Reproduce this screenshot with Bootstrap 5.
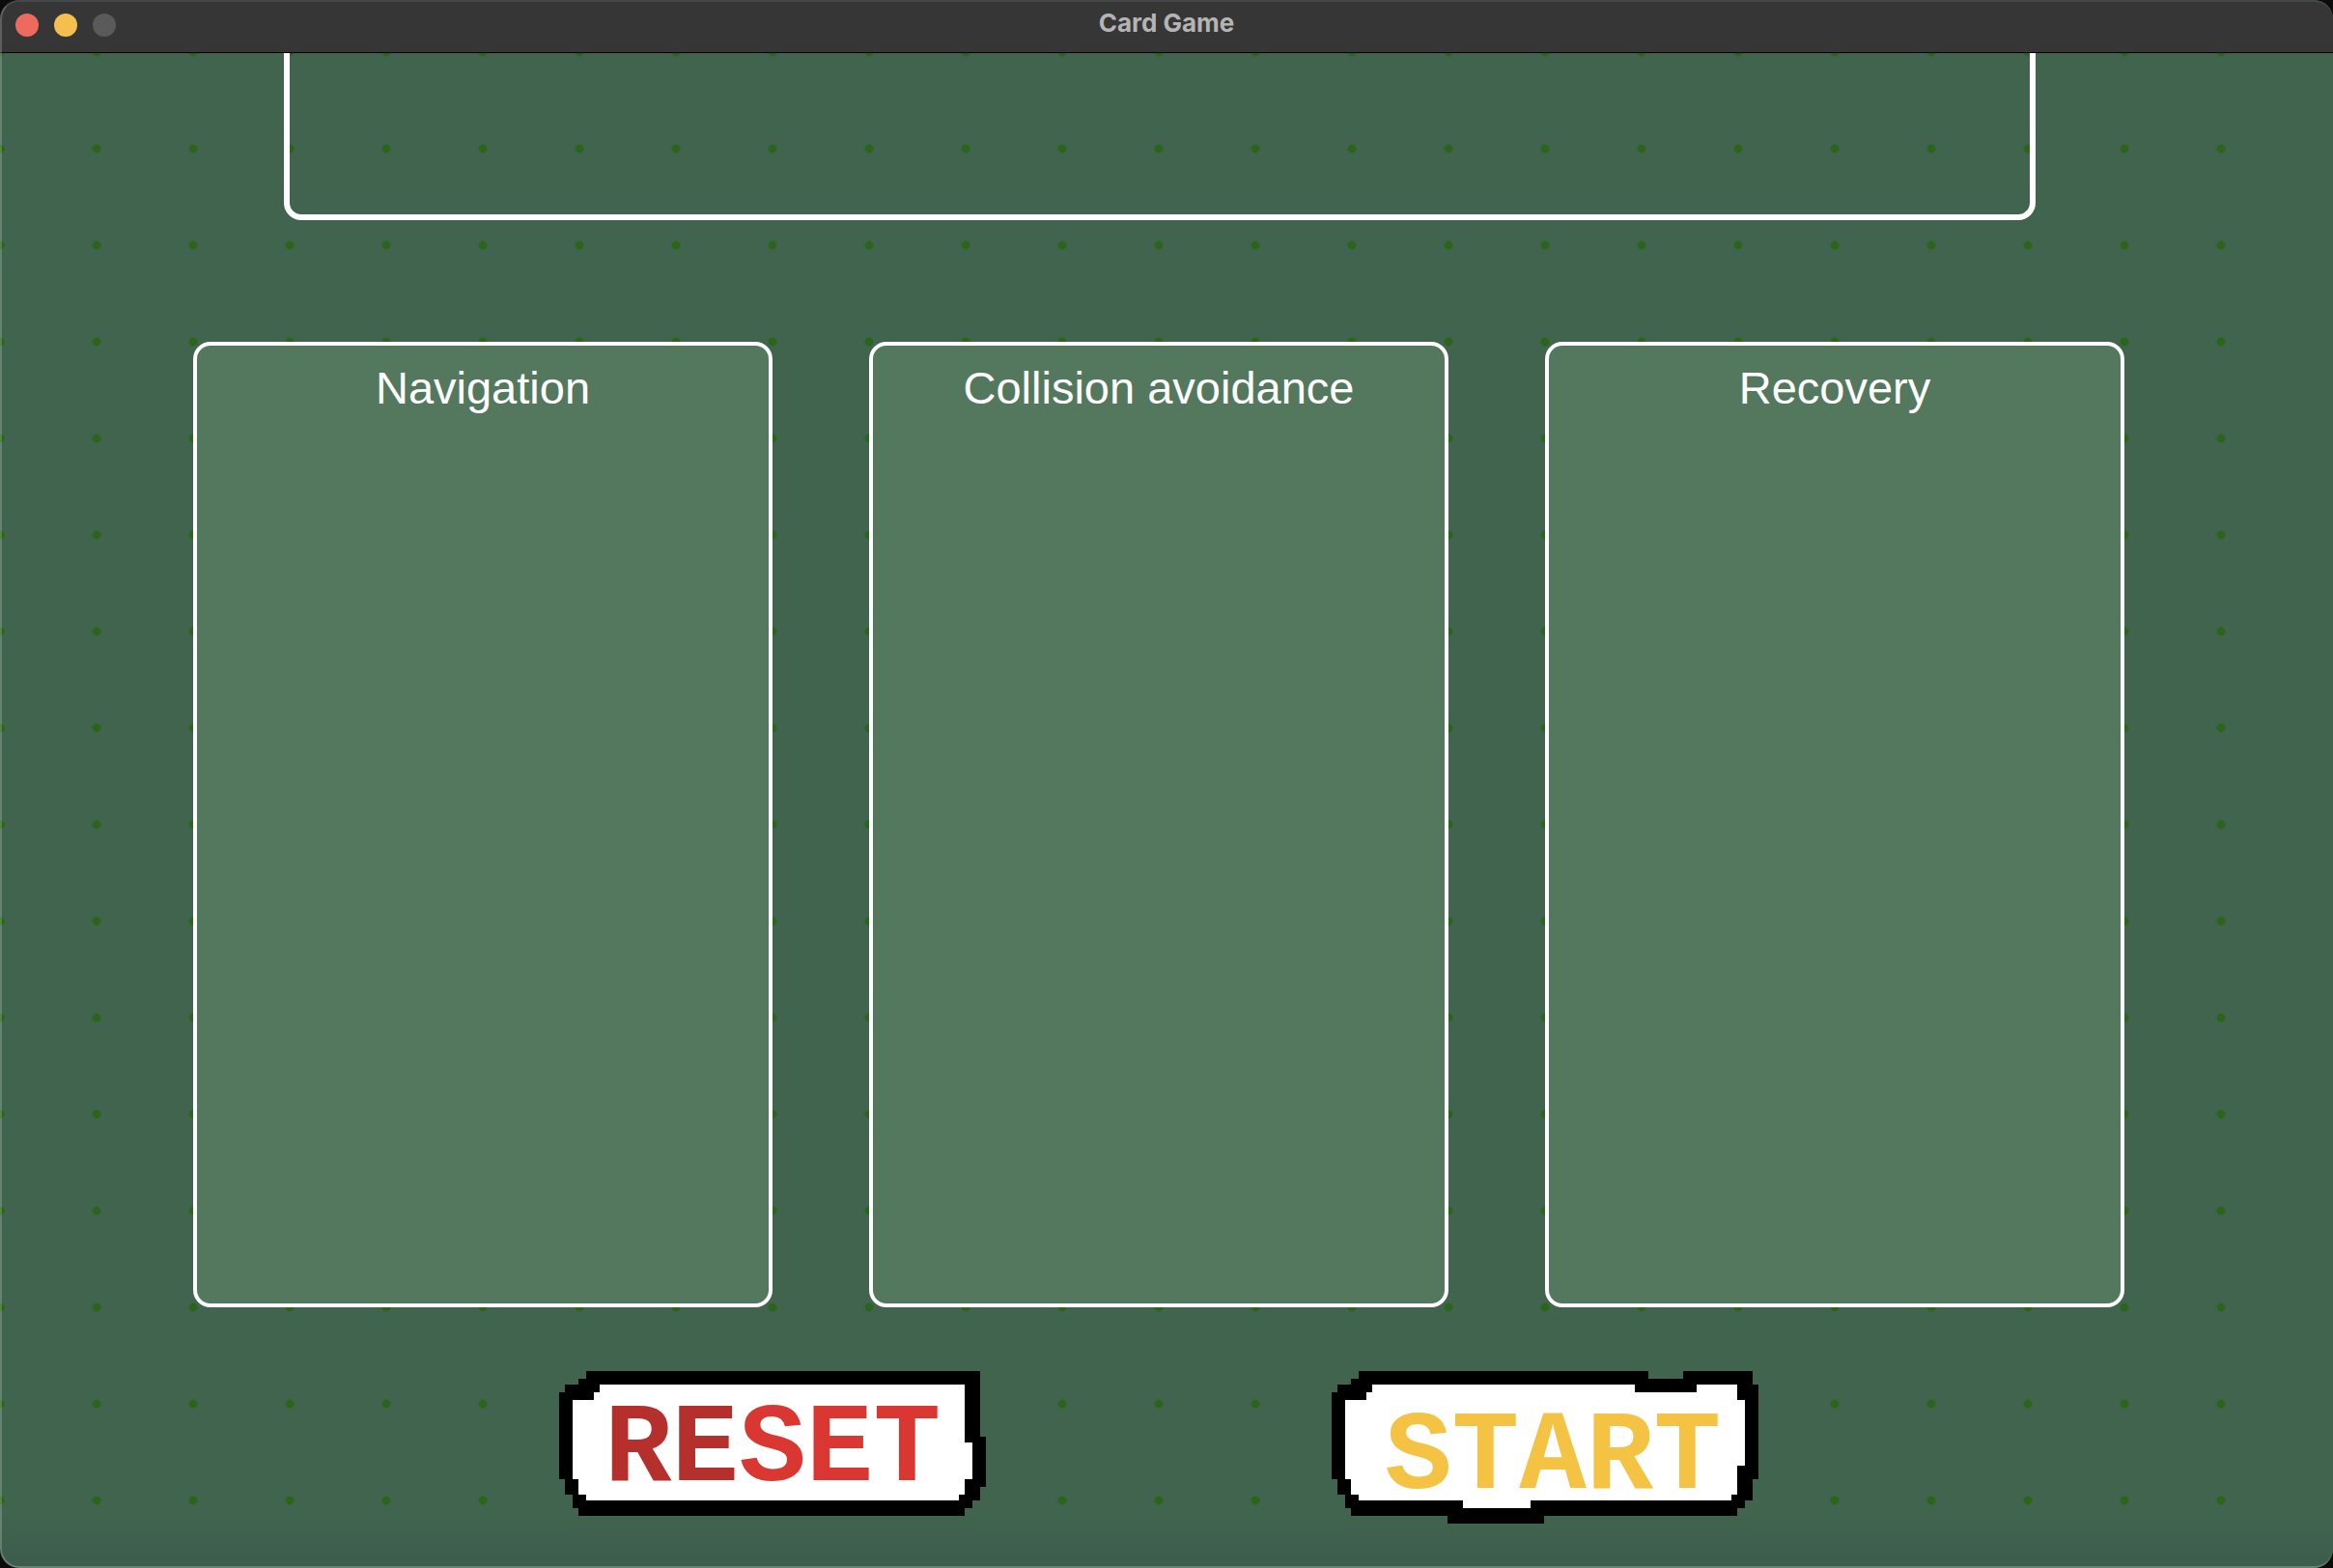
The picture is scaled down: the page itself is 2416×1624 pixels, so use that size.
<!DOCTYPE html>
<html lang="en">
<head>
<meta charset="utf-8">
<meta name="viewport" content="width=device-width, initial-scale=1">
<title>Card Game</title>
<link href="https://cdn.jsdelivr.net/npm/bootstrap@5.3.0/dist/css/bootstrap.min.css" rel="stylesheet">
<style>
body { background: #0c0c0c; font-family: "Liberation Sans", Arial, sans-serif; }
.app-window { min-height: 100vh; border-radius: 20px; background: #41644e; }
/* thin highlight and soft shade along the window edge */
.app-window::after {
  content: ""; position: absolute; inset: 0; border-radius: 20px; pointer-events: none;
  border: 2px solid rgba(255, 255, 255, .2); border-top-color: rgba(255, 255, 255, .08); border-right-width: 0;
  background: linear-gradient(to top, rgba(50, 70, 75, .25), transparent 50px);
}
.title-bar { height: 55px; padding: 0 16px; background: #363636; border-bottom: 1px solid #000; }
.title-text { font: 700 26px/48px Inter, sans-serif; color: #b5b4b4; }
.window-controls { width: 104px; gap: 16px; padding-top: 14px; }
.dot-btn { width: 24px; height: 24px; padding: 0; border: 0; border-radius: 50%; }
.dot-close { background: #ed6a5e; }
.dot-min { background: #f5bf4f; }
.dot-zoom { background: #5a5a5b; }
/* dotted felt; the grid stops short of the right edge */
.felt {
  padding: 0 216px 46px 200px;
  background-image: linear-gradient(#41644e, #41644e), radial-gradient(circle, #2b651b 4px, rgba(43, 101, 27, 0) 5px);
  background-size: 26px 100%, 100px 100px;
  background-position: right top, -50px -51px;
  background-repeat: no-repeat, repeat;
}
.hand-tray { height: 173px; margin: 0 92px 0 94px; border: 6px solid #fff; border-top: 0; border-radius: 0 0 18px 18px; }
.slots { gap: 100px; margin-top: 126px; }
.slot { background: #53785d; border: 4px solid #fff; border-radius: 18px; padding-top: 16px; }
.slot-title { font-size: 47px; line-height: 56px; font-weight: 400; color: #fff; margin: 0; }
.actions { gap: 358px; margin-top: 66px; }
.pixel-btn { width: 442px; height: 158px; border: 0; padding: 0; background: none; isolation: isolate; }
.pixel-btn svg { z-index: -1; }
.pixel-label { font: 700 116px/164px "Liberation Mono", monospace; }
.ink-dark { color: #b5302c; }
.ink-red { color: #da3732; }
.ink-gold { color: #f5c344; }
</style>
</head>
<body>
<div class="app-window position-relative overflow-hidden d-flex flex-column">
  <header class="title-bar d-flex align-items-start justify-content-between flex-shrink-0">
    <div class="window-controls d-flex">
      <button type="button" class="dot-btn dot-close" aria-label="Close"></button>
      <button type="button" class="dot-btn dot-min" aria-label="Minimize"></button>
      <button type="button" class="dot-btn dot-zoom" aria-label="Zoom" disabled></button>
    </div>
    <div class="title-text">Card Game</div>
    <div class="window-controls invisible"></div>
  </header>
  <main class="felt flex-grow-1 d-flex flex-column">
    <section class="hand-tray" aria-label="Hand"></section>
    <div class="slots d-flex flex-grow-1">
      <section class="slot flex-fill w-100 text-center"><h2 class="slot-title">Navigation</h2></section>
      <section class="slot flex-fill w-100 text-center"><h2 class="slot-title">Collision avoidance</h2></section>
      <section class="slot flex-fill w-100 text-center"><h2 class="slot-title">Recovery</h2></section>
    </div>
    <div class="actions d-flex justify-content-center">
      <button type="button" class="pixel-btn position-relative d-flex justify-content-center align-items-start">
        <svg class="position-absolute top-0 start-0 w-100 h-100" viewBox="30 60 1326 474" aria-hidden="true">
          <path d="M114 60H1338V264H1356V420H1338V462H1314V486H1290V510H90V486H72V444H48V396H30V126H48V102H90V84H114Z"/>
          <path fill="#fff" d="M156 102H1290V282H1314V396H1290V444H1272V462H114V444H90V396H72V150H138V126H156Z"/>
        </svg>
        <span class="pixel-label ink-red"><span class="ink-dark">RE</span>SET</span>
      </button>
      <button type="button" class="pixel-btn position-relative d-flex justify-content-center align-items-start pt-2 ps-3">
        <svg class="position-absolute top-0 start-0 w-100 h-100" viewBox="30 60 1326 474" aria-hidden="true">
          <path d="M114 60H1014V84H1122V60H1338V102H1356V396H1338V462H1314V486H1290V510H690V534H390V510H90V486H72V444H48V396H30V126H48V102H90V84H114Z"/>
          <path fill="#fff" d="M156 102H972V126H1164V102H1290V150H1314V354H1290V444H1272V462H648V486H438V462H114V444H90V396H72V150H138V126H156Z"/>
        </svg>
        <span class="pixel-label ink-gold">START</span>
      </button>
    </div>
  </main>
</div>
<script src="https://cdn.jsdelivr.net/npm/bootstrap@5.3.0/dist/js/bootstrap.bundle.min.js"></script>
</body>
</html>
